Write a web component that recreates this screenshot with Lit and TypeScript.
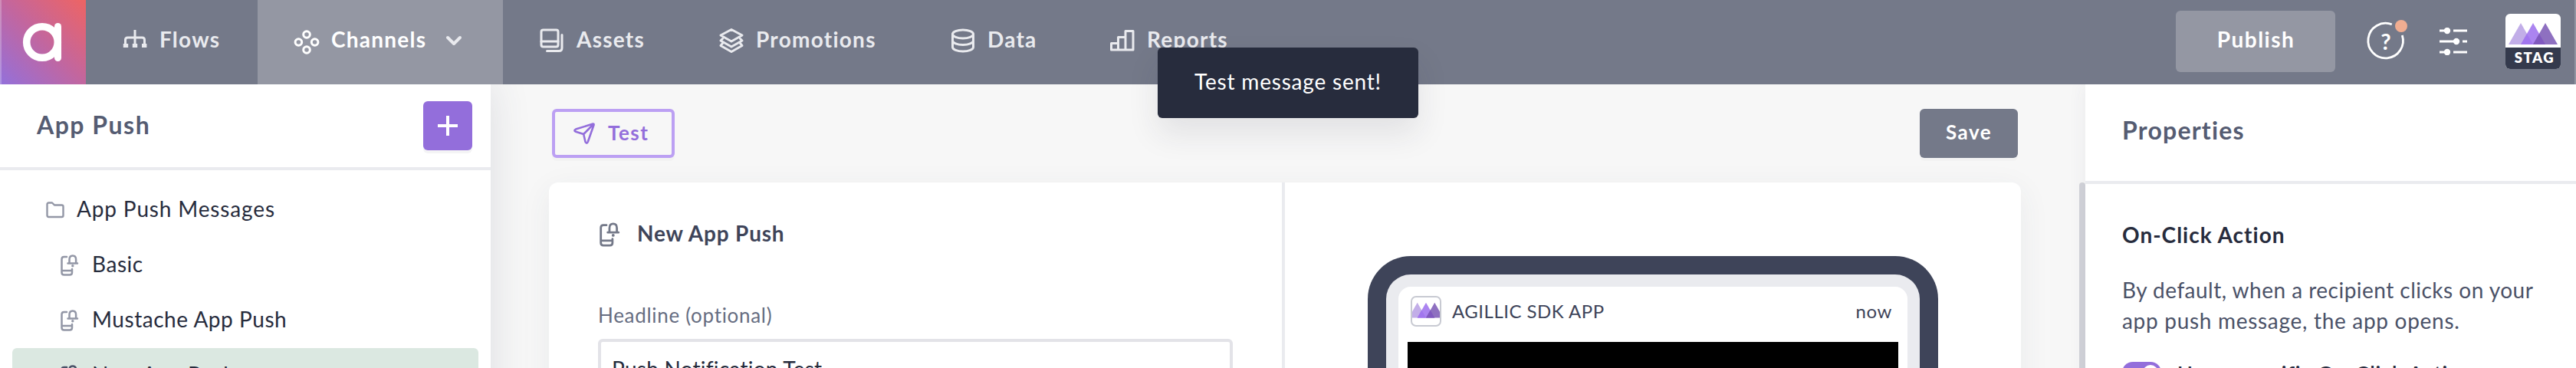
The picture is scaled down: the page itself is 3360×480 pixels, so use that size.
import { LitElement, html, css, svg } from "lit";
import { customElement } from "lit/decorators.js";
import { styleMap } from "lit/directives/style-map.js";
import { classMap } from "lit/directives/class-map.js";

const icon = (w: number, h: number, body: unknown, box = `0 0 ${w} ${h}`) =>
  html`<svg class="icon" width=${w} height=${h} viewBox=${box} fill="none" stroke="currentColor" stroke-width="3" stroke-linecap="round" stroke-linejoin="round">${body}</svg>`;

const flows = icon(32, 40, svg`<path stroke-linecap="butt" d="M16 7v21M3.500 28v-8q0-3 3-3h19q3 0 3 3v8"/><path fill="currentColor" stroke="none" d="M.8 25h6.400v5H.8zM12.800 25h6.400v5h-6.400zM25 25h6.400v5H25z"/>`);
const channels = icon(32, 40, svg`<circle cx="16" cy="13" r="4.300"/><circle cx="5.400" cy="23" r="4.300"/><circle cx="26.600" cy="23" r="4.300"/><circle cx="16" cy="33" r="4.300"/>`);
const assets = icon(32, 40, svg`<rect x="2" y="7" width="22" height="22" rx="2.500"/><path d="M2 22h22M29 13.500v17q0 4-4 4H9.500"/>`);
const promotions = icon(32, 40, svg`<path d="M16 6.500 30 14 16 22 2 14zM4.500 18.500 2 21l14 8 14-8-2.500-2.500M4.500 24.500 2 27.500 16 35.500l14-8-2.500-3"/>`);
const data = icon(32, 40, svg`<ellipse cx="16" cy="12.500" rx="13.500" ry="5.500"/><path d="M2.500 12.500v17c0 3 6 5.500 13.500 5.500s13.500-2.500 13.500-5.500v-17M2.500 21c0 3 6 5.500 13.500 5.500S29.500 24 29.500 21"/>`);
const reports = icon(32, 40, svg`<path d="M1.500 24.500h9V33h-9zM10.500 33V16.500h9.500V33M20 33V8.500h10V33H1.500"/>`);
const chevron = icon(22, 14, svg`<path stroke-width="4" d="M3 3l8 8 8-8"/>`);
const plane = icon(28, 28, svg`<path stroke-width="2.600" d="M25.500 1.500 3 8.600q-3.200 1.500 0 3.200L13.200 15l2.300 10q1.800 3.400 3.300 0L26.500 3q.3-1.600-1-1.500zM26 2 13.200 15"/>`);
const folder = icon(24, 22, svg`<path stroke-width="2.400" d="M1.500 3.500q0-2 2-2H8l3 3h9.500q2 0 2 2V18q0 2-2 2h-17q-2 0-2-2z"/>`);
const device = (w: number, h: number) => icon(w, h, svg`<g stroke-width="2.500"><path d="M8 3H4.500Q1.500 3 1.500 6v17.500q0 3 3 3H12q3 0 3-3V19M1.500 21H15"/><path d="M9.500 11.500h12.500M11.500 11V6.500q0-5 4.300-5t4.300 5V11"/></g><circle cx="15.800" cy="14.800" r="1.700" fill="currentColor" stroke="none"/>`, "0 0 24 28");
const peaks = (w: number, h: number, box: string) => html`<svg class="icon" width=${w} height=${h} viewBox=${box}>
  <path fill="#c2aee8" d="M4 40 20 12l16 28z"/><path fill="#ab84f0" d="M20 40 36 12l16 28z"/><path fill="#8e70c0" d="M36 40 52 12l16 28z"/>
  <path fill="#a176ee" d="M20 40l8-14 8 14z"/><path fill="#8059bf" d="M36 40l8-14 8 14z"/></svg>`;

const NAV = [
  { label: "Flows", icon: flows, width: 224 },
  { label: "Channels", icon: channels, width: 320, active: true },
  { label: "Assets", icon: assets, width: 234 },
  { label: "Promotions", icon: promotions, width: 302 },
  { label: "Data", icon: data, width: 208 },
  { label: "Reports", icon: reports, width: 240 },
];

@customElement("app-nav")
class AppNav extends LitElement {
  static styles = css`
    :host { display: flex; height: 110px; background: #747989; color: #e9eaee; box-sizing: border-box; border-right: 2px solid #9195a2; font: 700 28px/36px Lato, sans-serif; letter-spacing: 1.250px; }
    .icon { display: block; flex: none; }
    .logo { width: 112px; background: linear-gradient(45deg, #9370db, #c2669f 50%, #ee6463); box-shadow: inset 2px 0 rgba(255,255,255,.25); }
    .item { display: flex; align-items: center; box-sizing: border-box; padding: 0 0 8px 48px; white-space: nowrap; }
    .item .icon { margin: 2px 16px 0 0; overflow: visible; }
    .item.active { background: #9497a3; color: #fff; }
    .item .arrow { margin: 2px 0 0 25px; color: #e9eaee; }
    .spacer { flex: 1; }
    .tools { display: flex; align-items: center; padding: 0 18px 2px 0; color: #fff; }
    .publish { width: 208px; height: 80px; box-sizing: border-box; padding: 19px 0 0 1px; text-align: center; border-radius: 6px; background: #9497a3; letter-spacing: 1.500px; }
    .help { margin-left: 40px; }
    .help text { font: 700 29px Lato, sans-serif; letter-spacing: 0; }
    .sliders { margin-left: 40px; }
    .badge { width: 72px; height: 72px; margin-left: 50px; border-radius: 6px; overflow: hidden; background: #fff; }
    .badge .tag { height: 28px; background: #343a4d; font: 800 18.500px/27px Lato, sans-serif; letter-spacing: 1.500px; text-align: center; padding-left: 4px; }
  `;
  render() {
    return html`
      <svg class="icon logo" viewBox="0 0 112 110" fill="none" stroke="#fff"><circle cx="55" cy="55" r="20.300" stroke-width="9.600"/><path stroke-width="9" stroke-linecap="round" d="M75.500 34.500v41"/></svg>
      ${NAV.map(n => html`<div class=${classMap({ item: true, active: !!n.active })} style=${styleMap({ width: `${n.width}px` })}>${n.icon}<span>${n.label}</span>${n.active ? html`<span class="arrow">${chevron}</span>` : ""}</div>`)}
      <div class="spacer"></div>
      <div class="tools">
        <div class="publish">Publish</div>
        <svg class="icon help" width="56" height="56" viewBox="0 0 56 56"><path fill="none" stroke="#fff" stroke-width="2.800" d="M33.800 5.800A22.800 22.800 0 1 0 47.300 20"/><circle cx="46" cy="8" r="8" fill="#f0ad91"/><text x="26" y="38.500" text-anchor="middle" fill="#fff">?</text></svg>
        <svg class="icon sliders" width="36" height="36" viewBox="0 0 36 36" fill="#fff" stroke="#fff" stroke-width="3"><path d="M0 4h10M18 4h18M0 18h22M30 18h6M0 32h10M18 32h18"/><g stroke="none"><circle cx="10" cy="4" r="4.200"/><circle cx="22" cy="18" r="4.200"/><circle cx="10" cy="32" r="4.200"/></g></svg>
        <div class="badge">${peaks(72, 44, "0 0 72 44")}<div class="tag">STAG</div></div>
      </div>`;
  }
}

@customElement("app-sidebar")
class AppSidebar extends LitElement {
  static styles = css`
    :host { display: block; background: #fff; box-shadow: 0 0 50px rgba(60,66,90,.14); font: 400 28px/36px Lato, sans-serif; color: #272c3d; }
    .icon { display: block; flex: none; }
    .head { display: flex; justify-content: space-between; align-items: center; height: 108px; padding: 0 24px 0 48px; border-bottom: 4px solid #eaebef; }
    h2 { margin: 0; padding-bottom: 3px; font: 700 32px/40px Lato, sans-serif; letter-spacing: 1.500px; color: #555c72; }
    .add { width: 64px; height: 64px; display: flex; align-items: center; justify-content: center; border-radius: 6px; background: #936edb; color: #fff; box-shadow: 0 4px rgba(40,44,60,.05); }
    .list { padding: 16px; }
    .row { display: flex; align-items: center; height: 72px; border-radius: 6px; padding-left: 44px; color: #9397a6; }
    .row.child { padding-left: 63px; }
    .row span { color: #272c3d; margin-left: 16px; padding-bottom: 4px; letter-spacing: .850px; }
    .row.child span { margin-left: 17px; letter-spacing: .550px; }
    .row.selected { background: #dbe8e1; color: #4b5268; }
  `;
  render() {
    return html`
      <div class="head"><h2>App Push</h2><div class="add">${icon(26, 26, svg`<path stroke-linecap="butt" stroke-width="4" d="M0 13h26M13 0v26"/>`)}</div></div>
      <div class="list">
        <div class="row">${folder}<span>App Push Messages</span></div>
        ${["Basic", "Mustache App Push", "New App Push"].map((t, i) => html`<div class=${classMap({ row: true, child: true, selected: i === 2 })}>${device(24, 28)}<span>${t}</span></div>`)}
      </div>`;
  }
}

@customElement("app-editor")
class AppEditor extends LitElement {
  static styles = css`
    :host { display: block; padding: 0 76px; font: 400 28px/36px Lato, sans-serif; color: #272c3d; }
    .icon { display: block; flex: none; }
    .bar { display: flex; justify-content: space-between; align-items: center; height: 128px; padding: 0 4px; font: 700 26px/32px Lato, sans-serif; }
    .test, .save { display: flex; box-sizing: border-box; height: 64px; border-radius: 6px; box-shadow: 0 4px rgba(40,44,60,.02); }
    .test { width: 160px; border: 4px solid #bca0f3; color: #936edb; align-items: center; padding-left: 24px; letter-spacing: 1.500px; }
    .test span { margin-left: 17px; padding-bottom: 3px; }
    .save { width: 128px; background: #747989; color: #fff; justify-content: center; padding-top: 14px; letter-spacing: 1.500px; }
    .card { display: grid; grid-template-columns: 960px 1fr; height: 400px; background: #fff; border-radius: 12px 12px 0 0; box-shadow: 0 10px 40px rgba(60,66,90,.07); }
    .form { border-right: 4px solid #eaebef; padding: 50px 64px 0; }
    .title { display: flex; align-items: center; height: 36px; color: #747989; }
    .title span { font-weight: 700; color: #3e4459; letter-spacing: .800px; margin-left: 22px; padding-bottom: 4px; }
    .title .icon { margin-left: 2px; }
    label { display: block; margin: 71px 0 0; font-size: 26px; line-height: 32px; letter-spacing: .700px; color: #666d81; }
    .input { box-sizing: border-box; height: 80px; margin-top: 15px; border: 4px solid #e3e3e8; border-radius: 6px; padding: 17px 14px; letter-spacing: .250px; }
    .preview { padding: 96px 108px 0; }
    .phone { border: 24px solid #3e4459; border-bottom: 0; border-radius: 56px 56px 0 0; background: #eaebef; padding: 16px 16px 0; }
    .screen { height: 300px; background: #fff; border-radius: 16px 16px 0 0; padding: 0 12px; }
    .notice { display: flex; align-items: center; height: 64px; padding: 0 8px 8px 4px; font-size: 24px; color: #3e4459; letter-spacing: .500px; }
    .notice b { width: 36px; height: 36px; border: 2px solid #c8cad2; border-radius: 7px; overflow: hidden; }
    .notice span { margin: 0 auto 0 14px; }
    .now { letter-spacing: .600px; }
    .photo { height: 200px; background: #000; }
  `;
  render() {
    return html`
      <div class="bar"><div class="test">${plane}<span>Test</span></div><div class="save">Save</div></div>
      <div class="card">
        <div class="form">
          <div class="title">${device(27, 32)}<span>New App Push</span></div>
          <label>Headline (optional)</label>
          <div class="input">Push Notification Test</div>
        </div>
        <div class="preview"><div class="phone"><div class="screen">
          <div class="notice"><b>${peaks(36, 36, "10.500 2.500 51 51")}</b><span>AGILLIC SDK APP</span><div class="now">now</div></div>
          <div class="photo"></div>
        </div></div></div>
      </div>`;
  }
}

@customElement("app-properties")
class AppProperties extends LitElement {
  static styles = css`
    :host { display: grid; grid-template-columns: 8px 640px; font: 400 28px/40px Lato, sans-serif; color: #4b5268; }
    .thumb { margin-top: 128px; background: #d2d3d9; border-radius: 4px 4px 0 0; }
    .panel { background: #fff; box-shadow: -4px 0 20px rgba(60,66,90,.05); }
    h2 { margin: 0; height: 86px; padding: 40px 0 0 48px; border-bottom: 4px solid #eaebef; font: 700 32px/40px Lato, sans-serif; letter-spacing: 1.200px; color: #555c72; }
    .body { padding: 46px 40px 0 48px; }
    h3 { margin: 0 0 32px; font: 700 28px/40px Lato, sans-serif; letter-spacing: 1px; color: #272c3d; }
    p { margin: 0; white-space: nowrap; }
    .one { letter-spacing: .480px; }
    .two { letter-spacing: .700px; }
    .option { display: flex; align-items: flex-start; margin-top: 34px; color: #272c3d; font: 600 27px/30px Lato, sans-serif; letter-spacing: .900px; white-space: nowrap; }
    .toggle { box-sizing: border-box; width: 51px; height: 28px; margin-right: 21px; border-radius: 14px; background: #936edb; padding: 4px; display: flex; justify-content: flex-end; }
    .toggle i { width: 20px; height: 20px; border-radius: 50%; background: #fff; }
  `;
  render() {
    return html`
      <div class="thumb"></div>
      <div class="panel">
        <h2>Properties</h2>
        <div class="body">
          <h3>On-Click Action</h3>
          <p class="one">By default, when a recipient clicks on your</p>
          <p class="two">app push message, the app opens.</p>
          <div class="option"><div class="toggle"><i></i></div>Use a specific On-Click Action</div>
        </div>
      </div>`;
  }
}

@customElement("app-root")
class AppRoot extends LitElement {
  static styles = css`
    :host { display: grid; grid-template-rows: 110px 370px; height: 480px; overflow: hidden; position: relative; background: #f7f7f7; }
    app-nav { z-index: 2; }
    .main { display: grid; grid-template-columns: 640px 2072px 648px; min-height: 0; overflow: hidden; }
    .toast { position: absolute; z-index: 3; left: 1510px; top: 62px; width: 340px; height: 92px; box-sizing: border-box; padding-top: 26px; text-align: center; border-radius: 6px; background: #272c3d; color: #fff; font: 400 28px/36px Lato, sans-serif; letter-spacing: .800px; box-shadow: 0 20px 40px rgba(39,44,61,.1); }
  `;
  render() {
    return html`
      <app-nav></app-nav>
      <div class="main"><app-sidebar></app-sidebar><app-editor></app-editor><app-properties></app-properties></div>
      <div class="toast">Test message sent!</div>`;
  }
}
